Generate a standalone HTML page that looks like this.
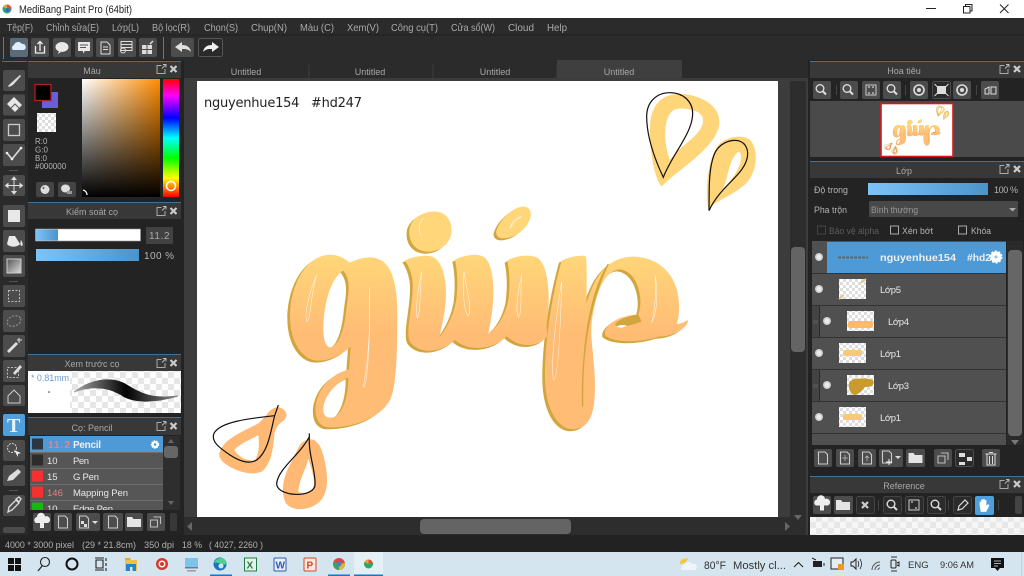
<!DOCTYPE html>
<html><head><meta charset="utf-8"><title>MediBang Paint Pro</title>
<style>
html,body{margin:0;padding:0;background:#222;width:1024px;height:576px;overflow:hidden}
svg{display:block}
text{font-family:"Liberation Sans","Noto Sans CJK SC",sans-serif;font-size:9.5px;fill:#b4b4b4}
.m{font-size:10.5px;fill:#aaa}
.t{text-anchor:middle;font-size:9px;fill:#a8a8a8}
.l{font-size:9.5px;fill:#e8e8e8}
.w{font-size:10px;fill:#eee;font-weight:bold}
.b{fill:#4c4c4c}
.k{fill:#333;font-size:11px}
.tb{fill:#222;font-size:11px}
.st{font-size:9.5px;fill:#b0b0b0}
.f{font-size:9px}
</style></head><body>
<svg width="1024" height="576" viewBox="0 0 1024 576" xmlns="http://www.w3.org/2000/svg">
<defs>
<pattern id="ck" width="12" height="12" patternUnits="userSpaceOnUse"><rect width="12" height="12" fill="#fff"/><rect width="6" height="6" fill="#e6e6e6"/><rect x="6" y="6" width="6" height="6" fill="#e6e6e6"/></pattern>
<pattern id="ck2" width="6" height="6" patternUnits="userSpaceOnUse"><rect width="6" height="6" fill="#fff"/><rect width="3" height="3" fill="#ddd"/><rect x="3" y="3" width="3" height="3" fill="#ddd"/></pattern>
<pattern id="ck3" width="12" height="12" patternUnits="userSpaceOnUse"><rect width="12" height="12" fill="#f6f6f6"/><rect width="6" height="6" fill="#e8e8e8"/><rect x="6" y="6" width="6" height="6" fill="#e8e8e8"/></pattern>
<linearGradient id="sv1" x1="0" x2="1" y1="0" y2="0"><stop offset="0" stop-color="#fff"/><stop offset="1" stop-color="#ff8c00"/></linearGradient>
<linearGradient id="sv2" x1="0" x2="0" y1="0" y2="1"><stop offset="0" stop-color="#000" stop-opacity="0"/><stop offset="1" stop-color="#000"/></linearGradient>
<linearGradient id="hue" x1="0" x2="0" y1="0" y2="1"><stop offset="0" stop-color="#f00"/><stop offset=".14" stop-color="#f0f"/><stop offset=".33" stop-color="#00f"/><stop offset=".5" stop-color="#0ff"/><stop offset=".67" stop-color="#0f0"/><stop offset=".84" stop-color="#ff0"/><stop offset="1" stop-color="#f00"/></linearGradient>
<linearGradient id="bl" x1="0" x2="1" y1="0" y2="0"><stop offset="0" stop-color="#7cc4f8"/><stop offset="1" stop-color="#4a94cc"/></linearGradient>
<linearGradient id="gr" x1="0" x2="1" y1="0" y2="1"><stop offset="0" stop-color="#555"/><stop offset="1" stop-color="#ddd"/></linearGradient>
<linearGradient id="stk" x1="0" x2="1" y1="0" y2="0"><stop offset="0" stop-color="#aaa"/><stop offset=".5" stop-color="#000"/><stop offset="1" stop-color="#888"/></linearGradient>
<linearGradient id="let3" gradientUnits="userSpaceOnUse" x1="0" y1="170" x2="0" y2="400"><stop offset="0" stop-color="#ffd679"/><stop offset="1" stop-color="#ffbc75"/></linearGradient>

<path id="glet" fill-rule="evenodd" d="M208 188C190 170 165 162 140 165C70 175 30 265 30 350C30 430 70 482 115 482C150 482 185 465 212 440L207 508C160 520 120 555 108 610C102 650 115 682 150 682C220 682 300 655 330 600C350 560 352 450 352 340C352 250 335 172 270 172C250 172 232 178 208 188ZM190 212C150 235 130 320 130 385C130 420 138 442 152 442C180 435 195 380 200 320C205 280 215 245 190 212ZM205 532C165 550 130 590 130 630C130 650 145 658 165 650C190 635 205 590 205 532Z"/>
<path id="iuu" d="M375 182C395 170 430 165 450 168C485 175 498 230 498 280C498 330 485 380 478 412C500 385 525 340 530 290C534 250 532 210 525 180C550 165 590 160 610 170C635 185 642 240 640 290C638 340 630 375 625 402C650 385 675 350 685 300C690 260 690 220 682 182C710 165 755 162 775 175C800 195 808 260 806 310C805 340 800 365 800 385L802 408C780 440 720 448 680 408C650 445 570 460 525 420C490 455 420 468 390 425C375 395 400 320 398 250C396 220 385 195 375 182Z"/>
<path id="pst" d="M845 182C865 172 895 165 915 168C920 170 920 190 920 220L920 310C945 220 990 170 1060 170C1140 170 1195 230 1197 310C1198 340 1195 360 1190 372C1205 372 1218 362 1225 360C1222 385 1180 410 1135 410C1085 428 1000 430 975 405C970 385 1000 348 1075 343C1092 300 1075 215 1020 208C970 210 945 290 935 370C930 420 945 480 945 560C945 640 930 685 880 688C830 688 795 620 795 530C795 420 815 290 845 182Z"/>
<g id="letters"><use href="#glet"/><use href="#iuu"/><use href="#pst"/>
<path d="M455 35C490 30 515 55 515 90C515 130 480 155 445 155C410 155 385 130 388 90C392 60 420 38 455 35Z"/>
<path d="M725 20C745 18 755 30 752 50C745 85 705 115 670 115C655 115 645 105 650 90C660 60 695 25 725 20Z"/></g>

<g id="art">
<g transform="translate(280 200) scale(.3333)">
<use href="#letters" transform="translate(-8 6)" fill="#d2a63e"/>
<use href="#letters" fill="url(#let3)"/>
<path d="M1075 343C1040 350 1010 360 1005 375C1020 385 1060 375 1085 365Z" fill="#d2a63e"/>
<path d="M1010 380c10-6 22-6 30-3c-8 6-22 8-30 3Z" fill="#fff"/>
<path d="M908 620C904 500 918 330 985 192C935 270 905 420 908 620Z" fill="#d2a63e" stroke="#d2a63e" stroke-width="4"/>
<g fill="none" stroke="#fff" stroke-width="1.600" opacity=".85">
<path d="M110 225C90 270 72 340 80 365C92 365 92 280 110 225Z"/>
<path d="M268 262C272 380 265 480 250 562C262 560 272 420 268 262Z"/>
<path d="M425 215C415 260 405 330 412 355C422 340 420 260 425 215Z"/>
<path d="M552 215C548 270 550 330 565 348C578 330 560 270 552 215Z"/>
<path d="M725 225C715 270 705 330 715 352C728 340 720 270 725 225Z"/>
<path d="M845 245C830 340 812 470 820 540C836 540 842 360 845 245Z"/>
<path d="M1125 225C1130 270 1125 330 1115 368C1132 340 1135 270 1125 225Z"/>
<path d="M432 55C418 65 412 90 425 108"/>
<path d="M725 50C708 52 695 65 690 85C700 65 712 58 725 50Z"/>
</g></g>
<g transform="translate(630 80) scale(.3333)">
<path fill="#ffd579" fill-rule="evenodd" d="M95 320C70 290 58 200 60 140C62 80 90 42 150 42C200 42 268 70 268 125C268 200 140 270 95 320ZM120 240C100 190 100 120 125 95C140 80 175 85 200 95C215 102 222 112 218 130C210 170 145 200 120 240Z"/>
<path fill="#ffd579" fill-rule="evenodd" d="M235 385C225 330 232 240 265 195C285 172 335 160 360 180C385 205 382 260 360 295C335 335 270 355 235 385ZM280 325C295 290 295 250 318 222C325 212 333 215 333 230C333 265 305 300 280 325Z"/>
<g fill="none" stroke="#111" stroke-width="3.600"><path d="M100 292C75 240 50 170 50 110C50 65 80 38 120 38C160 38 188 65 188 100C188 160 125 225 100 292Z"/><path d="M237 392C238 330 235 270 252 225C265 190 300 178 325 182C350 188 358 215 350 240C335 290 270 320 237 392Z"/></g>
</g>
<g transform="translate(200 395) scale(.3333)">
<path fill="#ffb974" fill-rule="evenodd" d="M58 175C70 130 130 110 175 85C195 70 205 45 225 38C250 32 268 55 255 72C240 88 225 90 222 130C218 175 210 210 185 230C150 245 95 225 68 200C60 190 57 185 58 175ZM103 165C120 145 150 135 175 120C178 145 178 175 165 195C140 200 115 185 103 165Z"/>
<path fill="#ffb974" fill-rule="evenodd" d="M300 150C320 125 350 125 365 165C380 210 390 270 370 305C350 345 280 355 258 325C240 290 250 240 275 200C285 180 290 165 300 150ZM295 290C298 250 318 225 325 190C335 225 348 260 338 280C325 295 305 297 295 290Z"/>
<g fill="none" stroke="#111" stroke-width="3.600"><path d="M235 30L224 62C150 70 60 80 42 115C32 140 60 160 90 180C120 200 150 208 170 195C205 170 212 110 224 62"/><path d="M328 115L328 125C300 180 235 220 230 265C230 290 270 300 300 298C325 296 345 285 345 270C348 230 325 180 328 125"/></g>
</g>
</g>
<g id="mag"><circle cx="-1" cy="-1" r="3.800" fill="none" stroke="#ddd" stroke-width="1.400"/><path d="M2 2L5 5" stroke="#ddd" stroke-width="2"/></g>
<g id="doc"><path d="M-4.500-6H2L4.500-3.500V6H-4.500Z" fill="none" stroke="#ccc" stroke-width="1.100"/></g>
<g id="hd"><path d="M.5-3.500H-4v8H4V0" fill="none" stroke="#aaa"/><path d="M1-.5L4.500-4M2-4.500h3v3" fill="none" stroke="#bbb" stroke-width=".9"/></g>
<g id="xx"><path d="M-3-3L3 3M3-3L-3 3" stroke="#ccc" stroke-width="2.200"/></g>
<g id="eye"><circle r="4" fill="#ccc"/><circle r="2.500" fill="#ececec"/></g>
<g id="fld"><path d="M-7-5h5l1.500 2H7v8H-7Z" fill="#e4e4e4"/></g>
<g id="cop"><path d="M-5-2h7v7h-7Z M-2-5h7v7" fill="none" stroke="#bbb" stroke-width="1.100"/></g>
<g id="upl"><path d="M-6 1a3.200 3.200 0 0 1 1-6a4 4 0 0 1 8-0.500a3.400 3.400 0 0 1 3 6.500H2V6H-2V1Z" fill="#eee"/></g>
</defs>

<!-- title bar -->
<rect width="1024" height="18" fill="#fff"/>
<circle cx="7" cy="9" r="4.500" fill="#2fa56a"/><path d="M7 4.500a4.500 4.500 0 0 1 4.500 4.500H7Z" fill="#e0503c"/><path d="M3 7a4.500 4.500 0 0 1 4-2.500V9Z" fill="#e8a23a"/><circle cx="7.500" cy="10" r="2" fill="#2c6fc0"/>
<text x="19" y="13" class="tb" textLength="113" lengthAdjust="spacingAndGlyphs">MediBang Paint Pro (64bit)</text>
<path d="M926 8.500h10" stroke="#222"/><path d="M963.500 6.500h6.500v6.500h-6.500ZM965.500 6.500v-2h6.500v6.500h-2" fill="none" stroke="#222"/><path d="M1000 4.500l8.500 8.500M1008.500 4.500l-8.500 8.500" stroke="#222"/>

<!-- menu -->
<rect y="18" width="1024" height="42" fill="#2b2b2b"/><rect y="34.500" width="1024" height="1" fill="#222"/>
<text class="m" x="7" y="31" textLength="26" lengthAdjust="spacingAndGlyphs">Tệp(F)</text><text class="m" x="46" y="31" textLength="53" lengthAdjust="spacingAndGlyphs">Chỉnh sửa(E)</text><text class="m" x="112" y="31" textLength="27" lengthAdjust="spacingAndGlyphs">Lớp(L)</text><text class="m" x="152" y="31" textLength="38" lengthAdjust="spacingAndGlyphs">Bộ lọc(R)</text><text class="m" x="204" y="31" textLength="34" lengthAdjust="spacingAndGlyphs">Chọn(S)</text><text class="m" x="251" y="31" textLength="36" lengthAdjust="spacingAndGlyphs">Chụp(N)</text><text class="m" x="300" y="31" textLength="34" lengthAdjust="spacingAndGlyphs">Màu (C)</text><text class="m" x="347" y="31" textLength="32" lengthAdjust="spacingAndGlyphs">Xem(V)</text><text class="m" x="391" y="31" textLength="47" lengthAdjust="spacingAndGlyphs">Công cụ(T)</text><text class="m" x="451" y="31" textLength="44" lengthAdjust="spacingAndGlyphs">Cửa sổ(W)</text><text class="m" x="508" y="31" textLength="26" lengthAdjust="spacingAndGlyphs">Cloud</text><text class="m" x="547" y="31" textLength="20" lengthAdjust="spacingAndGlyphs">Help</text>

<!-- toolbar -->
<rect x="3" y="37" width="1" height="22" fill="#4d7f9f"/><rect x="163" y="37" width="1" height="22" fill="#4d7f9f"/>
<g class="b"><rect x="10" y="38" width="18" height="19" rx="2" fill="#5c6a76"/><rect x="31" y="38" width="18" height="19" rx="2"/><rect x="53" y="38" width="18" height="19" rx="2"/><rect x="75" y="38" width="18" height="19" rx="2"/><rect x="96" y="38" width="18" height="19" rx="2"/><rect x="118" y="38" width="18" height="19" rx="2"/><rect x="139" y="38" width="18" height="19" rx="2"/><rect x="171" y="38" width="23" height="19" rx="2"/></g>
<rect x="198.500" y="38.500" width="24" height="18" rx="2" fill="#2a2a2a" stroke="#555"/>
<path d="M13 50a3 3 0 0 1 1-5a4.500 4.500 0 0 1 8-1a3.200 3.200 0 0 1 2 6Z" fill="#dceeff"/>
<path d="M35.500 46v7h9v-7M40 51v-9M37.500 44l2.500-2.500 2.500 2.500" fill="none" stroke="#eee" stroke-width="1.300"/>
<ellipse cx="62" cy="47" rx="6.500" ry="5" fill="#e8e8e8"/><path d="M59 51l-1 3 3-2Z" fill="#e8e8e8"/>
<path d="M78 42h12v9h-5l-2 2.500V51h-5Z" fill="#e8e8e8"/><path d="M80 45h8M80 47.500h6" stroke="#555"/>
<path d="M101 42h6l3 3v9h-9ZM103 47h5M103 49.500h5" fill="none" stroke="#ddd"/>
<path d="M121 41.500h11v9h-11ZM121 44.500h11M121 47.500h11" fill="none" stroke="#ddd"/><circle cx="123" cy="50.500" r="2.500" fill="none" stroke="#ddd"/>
<path d="M142 45h10v9h-10Z" fill="#ddd"/><path d="M147 45v9M142 49.500h10" stroke="#4c4c4c"/><path d="M150 44l3-3" stroke="#ddd" stroke-width="1.500"/>
<path d="M175 47l7-5v3c5 0 8 2 9 7c-3-3-5-3-9-3v3Z" fill="#e0e0e0"/>
<path d="M219 47l-7-5v3c-5 0-8 2-9 7c3-3 5-3 9-3v3Z" fill="#f0f0f0"/>

<!-- left tool column -->
<rect y="60" width="28" height="475" fill="#2a2a2a"/>
<rect x="2" y="61" width="25" height="1" fill="#46708c"/>
<g class="b"><rect x="3" y="70" width="22" height="21" rx="2"/><rect x="3" y="94.500" width="22" height="21" rx="2"/><rect x="3" y="119" width="22" height="22" rx="2"/><rect x="3" y="144" width="22" height="22" rx="2"/><rect x="3" y="175" width="22" height="21" rx="2"/><rect x="3" y="205" width="22" height="22" rx="2"/><rect x="3" y="230" width="22" height="22" rx="2"/><rect x="3" y="255" width="22" height="22" rx="2"/><rect x="3" y="285" width="22" height="22" rx="2"/><rect x="3" y="310" width="22" height="22" rx="2"/><rect x="3" y="335" width="22" height="22" rx="2"/><rect x="3" y="360" width="22" height="22" rx="2"/><rect x="3" y="385" width="22" height="21" rx="2"/><rect x="3" y="440" width="22" height="21" rx="2"/><rect x="3" y="465" width="22" height="21" rx="2"/><rect x="3" y="495" width="22" height="21" rx="2"/><rect x="3" y="527" width="22" height="6" rx="2"/></g>
<rect x="3" y="414" width="22" height="22" rx="2" fill="#4f9fdc"/>
<rect x="9" y="170" width="9" height="1" fill="#555"/><rect x="9" y="281" width="9" height="1" fill="#555"/><rect x="9" y="490" width="9" height="1" fill="#555"/>
<path d="M8 86l3-3 9-8 1 1-8 9-4 2Z" fill="#ddd"/>
<path d="M14 97l8 8-7 7-8-8Z" fill="#e8e8e8"/><path d="M11 108l4-4 4 4" fill="none" stroke="#555"/>
<rect x="8.500" y="124.500" width="11" height="11" fill="none" stroke="#ccc" stroke-width="1.300"/>
<path d="M7 153l5 6 9-11" fill="none" stroke="#ddd" stroke-width="1.600"/><circle cx="7" cy="153" r="1.300" fill="#eee"/><circle cx="12" cy="159" r="1.300" fill="#eee"/><circle cx="21" cy="148" r="1.300" fill="#eee"/>
<path d="M14 177v17M5.500 185.500h17M14 177l-2 2.500h4ZM14 194l-2-2.500h4ZM5.500 185.500l2.500-2v4ZM22.500 185.500l-2.500-2v4Z" fill="#ddd" stroke="#ddd"/>
<rect x="8" y="210" width="12" height="12" fill="#e8e8e8"/>
<path d="M9 236h6l5 8c-2 3-10 4-13 0Z" fill="#e8e8e8"/><path d="M21 240c2 3 2 5 1 6c-2 0-2-3-1-6Z" fill="#e8e8e8"/>
<rect x="7" y="259" width="14" height="14" fill="url(#gr)" stroke="#ccc"/>
<rect x="8.500" y="290.500" width="11" height="11" fill="none" stroke="#bbb" stroke-dasharray="2 1.500"/>
<ellipse cx="14" cy="321" rx="7" ry="5" fill="none" stroke="#999" stroke-dasharray="2 1.500" transform="rotate(-20 14 321)"/>
<path d="M7 351l9-9 2 2-9 9Z" fill="#ddd"/><path d="M19 338v5M17 340h5" stroke="#ddd"/>
<rect x="7.500" y="367.500" width="11" height="10" fill="none" stroke="#bbb" stroke-dasharray="2 1.500"/><path d="M13 373l7-8 2 2-7 8Z" fill="#ddd"/>
<path d="M8 396l6-6 6 6v7H8Z" fill="none" stroke="#ccc"/>
<text x="7" y="432" style="font-family:'Liberation Serif',serif;font-size:20px;font-weight:bold;fill:#e6f3fc">T</text>
<circle cx="12" cy="448" r="4.500" fill="none" stroke="#ccc" stroke-dasharray="2 1"/><path d="M14 450l7 3-3 1 0 3Z" fill="#eee"/>
<path d="M7 481l2-5 9-7 3 3-8 8Z" fill="#ddd"/>
<path d="M8 512l1-5 7-7 3 3-7 7ZM16 499l3-2 2 2-2 3Z" fill="none" stroke="#ddd" stroke-width="1.300"/>

<!-- left panels -->
<rect x="28" y="60" width="156" height="475" fill="#232323"/>
<rect x="28" y="61" width="153" height="1" fill="#46708c"/><rect x="28" y="62" width="153" height="16" fill="#383838"/>
<text class="t" x="92" y="74">Màu</text>
<use href="#hd" x="161" y="69"/><use href="#xx" x="173.500" y="69"/>
<rect x="42" y="92" width="16" height="16" fill="#6a5fd8"/>
<rect x="35" y="84.500" width="16" height="16" fill="#000" stroke="#b81c1c" stroke-width="1.300"/>
<rect x="37" y="113" width="19" height="19" fill="url(#ck2)"/>
<text x="35" y="144" style="font-size:8px">R:0</text><text x="35" y="152.500" style="font-size:8px">G:0</text><text x="35" y="161" style="font-size:8px">B:0</text><text x="35" y="169" style="font-size:8px">#000000</text>
<rect x="82" y="79" width="78" height="118" fill="url(#sv1)"/><rect x="82" y="79" width="78" height="118" fill="url(#sv2)"/>
<path d="M83 190a5 5 0 0 1 4 5" fill="none" stroke="#fff" stroke-width="1.300"/>
<rect x="163" y="79" width="16" height="118" fill="url(#hue)"/>
<circle cx="171" cy="186" r="4.500" fill="none" stroke="#fff" stroke-width="1.600"/>
<rect x="36" y="182" width="18" height="15" rx="2" fill="#444"/><rect x="58" y="182" width="18" height="15" rx="2" fill="#444"/>
<ellipse cx="45" cy="189.500" rx="4.500" ry="4.500" fill="#ddd"/><circle cx="43.500" cy="188" r="1" fill="#555"/>
<ellipse cx="65.500" cy="188.500" rx="4.500" ry="4" fill="#ddd"/><rect x="67" y="191" width="5" height="3" fill="#999"/>

<rect x="28" y="202" width="153" height="1" fill="#46708c"/><rect x="28" y="203" width="153" height="16" fill="#383838"/>
<text class="t" x="92" y="215">Kiểm soát cọ</text>
<use href="#hd" x="161" y="211"/><use href="#xx" x="173.500" y="211"/>
<rect x="35.500" y="229" width="105" height="12" fill="#fff" stroke="#999" stroke-width=".6"/><rect x="36" y="229.500" width="22" height="11" fill="url(#bl)"/>
<rect x="146" y="227" width="27" height="17" rx="1" fill="#424242"/><text x="149" y="239" style="font-size:10px;fill:#aaa;letter-spacing:.6px">11.2</text>
<rect x="36" y="249" width="103" height="12" fill="url(#bl)"/>
<text x="144" y="259" style="font-size:10px" textLength="30">100 %</text>

<rect x="28" y="354" width="153" height="1" fill="#46708c"/><rect x="28" y="355" width="153" height="16" fill="#383838"/>
<text class="t" x="92" y="367">Xem trước cọ</text>
<use href="#hd" x="161" y="363"/><use href="#xx" x="173.500" y="363"/>
<rect x="70" y="371" width="111" height="42" fill="url(#ck)"/><rect x="28" y="371" width="42" height="42" fill="#fff"/>
<text x="31" y="381" style="font-size:9px;fill:#6a9ed0" textLength="38" lengthAdjust="spacingAndGlyphs">* 0.81mm</text><circle cx="49" cy="392" r=".8" fill="#333"/>
<path d="M74 392C90 380 110 376 125 384C138 392 150 400 178 396C150 404 130 402 120 394C105 386 90 386 74 392Z" fill="url(#stk)" stroke="url(#stk)"/>

<rect x="28" y="417" width="153" height="1" fill="#46708c"/><rect x="28" y="418" width="153" height="17" fill="#383838"/>
<text class="t" x="92" y="431">Cọ: Pencil</text>
<use href="#hd" x="161" y="426"/><use href="#xx" x="173.500" y="426"/>
<rect x="30" y="436" width="133" height="74" fill="#565656"/>
<rect x="30" y="436" width="133" height="16" fill="#4d9ad6"/>
<path d="M30 468.500h133M30 484.500h133M30 500.500h133M30 452.500h133" stroke="#777" stroke-width=".7"/>
<rect x="32" y="438.500" width="11" height="11" fill="#2d3640"/><rect x="32" y="454.500" width="11" height="11" fill="#2c2c2c"/><rect x="32" y="470.500" width="11" height="11" fill="#f53030"/><rect x="32" y="486.500" width="11" height="11" fill="#f53030"/><rect x="32" y="502.500" width="11" height="7.500" fill="#14b814"/>
<text x="48" y="448" style="fill:#f08080;font-size:10px;font-weight:bold" textLength="22">11.2</text><text x="73" y="448" class="w" textLength="28">Pencil</text>
<circle cx="155" cy="444.500" r="3.500" fill="#fff" stroke="#fff" stroke-width="1.500" stroke-dasharray="1.500 1"/><circle cx="155" cy="444.500" r="1.300" fill="#4d9ad6"/>
<text x="47" y="464" class="l">10</text><text x="73" y="464" class="l" textLength="16">Pen</text>
<text x="47" y="480" class="l">15</text><text x="73" y="480" class="l" textLength="26">G Pen</text>
<text x="47" y="496" style="fill:#e48080;font-size:9.500px">146</text><text x="73" y="496" class="l" textLength="55">Mapping Pen</text>
<svg x="30" y="500" width="133" height="10"><text x="17" y="12" class="l">10</text><text x="43" y="12" class="l" textLength="40">Edge Pen</text></svg>
<rect x="163" y="436" width="17" height="74" fill="#2e2e2e"/><rect x="164" y="446" width="14" height="12" rx="3" fill="#666"/><path d="M168 443l3-4 3 4Z M168 501l3 4 3-4Z" fill="#666"/>
<g class="b"><rect x="33" y="513" width="18" height="18" rx="2"/><rect x="54" y="513" width="18" height="18" rx="2"/><rect x="76" y="513" width="24" height="18" rx="2"/><rect x="103" y="513" width="20" height="18" rx="2"/><rect x="125" y="513" width="18" height="18" rx="2"/><rect x="147" y="513" width="18" height="18" rx="2"/><rect x="170" y="513" width="7" height="18" rx="2" fill="#383838"/></g>
<use href="#upl" x="42" y="522"/><use href="#doc" x="63" y="522"/><use href="#doc" x="84" y="522"/><rect x="81" y="521" width="3" height="3" fill="#ddd"/><rect x="84" y="524" width="3" height="3" fill="#ddd"/><path d="M92 521h6l-3 3Z" fill="#ddd"/><use href="#doc" x="113" y="522"/><use href="#fld" x="134" y="522"/><use href="#cop" x="155.500" y="522"/>

<!-- canvas area -->
<rect x="184" y="60" width="626" height="475" fill="#3c3c3c"/>
<rect x="184" y="60" width="626" height="21" fill="#2b2b2b"/>
<rect x="557" y="60" width="125" height="20" fill="#3f3f3f"/>
<path d="M309 64v15M433 64v15M557 64v15" stroke="#3c3c3c"/>
<rect x="184" y="78" width="626" height="3" fill="#3c3c3c"/>
<text class="t" x="246" y="75">Untitled</text><text class="t" x="370" y="75">Untitled</text><text class="t" x="495" y="75">Untitled</text><text class="t" x="619" y="75">Untitled</text>
<rect x="197" y="81" width="581" height="436" fill="#fff"/>
<text x="204" y="107" style="font-family:'DejaVu Sans',sans-serif;font-size:13px;fill:#222" textLength="158" xml:space="preserve">nguyenhue154   #hd247</text>
<use href="#art"/>
<rect x="184" y="517" width="606" height="18" fill="#2d2d2d"/>
<rect x="420" y="519" width="151" height="15" rx="4" fill="#646464"/>
<path d="M192 522v9l-5-4.500Z" fill="#666"/><path d="M785 522v9l5-4.500Z" fill="#666"/>
<rect x="790" y="81" width="16" height="454" fill="#2d2d2d"/><rect x="791" y="247" width="14" height="105" rx="4" fill="#646464"/>
<path d="M794 515h8l-4 5Z" fill="#666"/>

<!-- right panels -->
<rect x="808" y="60" width="216" height="475" fill="#232323"/>
<rect x="810" y="61" width="214" height="1" fill="#46708c"/><rect x="810" y="62" width="214" height="16" fill="#383838"/>
<text class="t" x="904" y="74">Hoa tiêu</text>
<use href="#hd" x="1004" y="69"/><use href="#xx" x="1017" y="69"/>
<g class="b"><rect x="813" y="81" width="18" height="18" rx="2"/><rect x="840" y="81" width="18" height="18" rx="2"/><rect x="862" y="81" width="18" height="18" rx="2"/><rect x="883" y="81" width="18" height="18" rx="2"/><rect x="910" y="81" width="18" height="18" rx="2"/><rect x="953" y="81" width="18" height="18" rx="2"/><rect x="981" y="81" width="18" height="18" rx="2"/></g>
<rect x="932.500" y="81.500" width="18" height="17" rx="2" fill="#2b2b2b" stroke="#4d4d4d"/>
<use href="#mag" x="821" y="89.500"/><use href="#mag" x="848" y="89.500"/><use href="#mag" x="892" y="89.500"/>
<rect x="866" y="85" width="10" height="10" fill="none" stroke="#ccc"/><path d="M868 87h2M874 93h-2M868 93h2M874 87h-2" stroke="#eee"/>
<circle cx="919" cy="90" r="5" fill="none" stroke="#ddd" stroke-width="1.600"/><circle cx="919" cy="90" r="2" fill="#ddd"/>
<rect x="937" y="86" width="9" height="8" fill="#ddd"/><path d="M934.500 84l3 3M948.500 84l-3 3M934.500 96l3-3M948.500 96l-3-3" stroke="#ddd"/>
<circle cx="962" cy="90" r="5" fill="none" stroke="#ddd" stroke-width="1.600"/><circle cx="962" cy="90" r="2" fill="#ddd"/>
<path d="M985 94v-5l4-2v7ZM991 87h5v7h-5Z" fill="none" stroke="#ddd"/>
<path d="M836.500 85v10M905.500 85v10M976.500 85v10" stroke="#444"/>
<rect x="810" y="101" width="214" height="56" fill="#4a4a4a"/>
<rect x="881" y="103.500" width="72" height="53" fill="#fff" stroke="#d81818" stroke-width="1.600"/>
<svg x="882" y="104.500" width="70" height="51" viewBox="197 81 581 436" preserveAspectRatio="none"><use href="#art"/></svg>

<rect x="810" y="161" width="214" height="1" fill="#46708c"/><rect x="810" y="162" width="214" height="16" fill="#383838"/>
<text class="t" x="904" y="174">Lớp</text>
<use href="#hd" x="1004" y="169"/><use href="#xx" x="1017" y="169"/>
<text x="814" y="193" class="f" textLength="34" lengthAdjust="spacingAndGlyphs">Độ trong</text>
<rect x="868" y="183" width="120" height="12" fill="url(#bl)"/>
<text x="994" y="193" class="f" textLength="24">100 %</text>
<text x="814" y="213" class="f" textLength="33" lengthAdjust="spacingAndGlyphs">Pha trộn</text>
<rect x="869" y="201" width="149" height="16" rx="1" fill="#484848"/>
<text x="871" y="213" style="font-size:9px;fill:#999" textLength="47" lengthAdjust="spacingAndGlyphs">Bình thường</text><path d="M1009 208h7l-3.500 3.500Z" fill="#aaa"/>
<rect x="817.500" y="226" width="8" height="8" fill="none" stroke="#444"/><text x="829" y="234" style="font-size:9px;fill:#5c5c5c" textLength="50" lengthAdjust="spacingAndGlyphs">Bảo vệ alpha</text>
<rect x="890.500" y="226" width="8" height="8" fill="none" stroke="#aaa"/><text x="902" y="234" class="f" textLength="31" lengthAdjust="spacingAndGlyphs">Xén bớt</text>
<rect x="958.500" y="226" width="8" height="8" fill="none" stroke="#aaa"/><text x="971" y="234" class="f" textLength="20" lengthAdjust="spacingAndGlyphs">Khóa</text>

<rect x="812" y="241" width="194" height="204" fill="#505050"/>
<rect x="827" y="242" width="179" height="31" fill="#4d9ad6"/>
<path d="M812 273.500h194M812 305.500h194M812 337.500h194M812 369.500h194M812 401.500h194M812 433.500h194" stroke="#333"/>
<rect x="812" y="306" width="7" height="31" fill="#444"/><rect x="812" y="370" width="7" height="31" fill="#444"/><path d="M819.500 306v31M819.500 370v31" stroke="#2a2a2a"/>
<path d="M813 321h5M813 323h5M813 385h5M813 387h5" stroke="#666" stroke-width=".7"/>
<use href="#eye" x="819" y="257"/><use href="#eye" x="819" y="289"/><use href="#eye" x="827" y="321"/><use href="#eye" x="819" y="353"/><use href="#eye" x="827" y="385"/><use href="#eye" x="819" y="417"/>
<path d="M838 257.500h30" stroke="#5a6a72" stroke-width="2" stroke-dasharray="3 1"/>
<text x="880" y="261" class="w" textLength="76" lengthAdjust="spacingAndGlyphs">nguyenhue154</text><text x="967" y="261" class="w" textLength="24" lengthAdjust="spacingAndGlyphs">#hd2</text>
<circle cx="996" cy="257" r="5.500" fill="#fff" stroke="#fff" stroke-width="2" stroke-dasharray="2 1.500"/><circle cx="996" cy="257" r="1.500" fill="#8fc3ea"/>
<rect x="839" y="279" width="27" height="20" fill="url(#ck2)"/><path d="M839 299l5-4M866 279l-5 4" stroke="#e6c78c" stroke-width="2"/>
<rect x="847" y="311" width="27" height="20" fill="url(#ck2)"/><rect x="848" y="321" width="25" height="7" rx="2" fill="#ffb968"/>
<rect x="839" y="343" width="27" height="20" fill="url(#ck2)"/><rect x="843" y="350" width="19" height="6" rx="2" fill="#fbc779"/>
<rect x="847" y="375" width="27" height="20" fill="url(#ck2)"/><path d="M849 383c2-4 8-5 10-4c3-1 8-1 14 1c2 6-3 7-8 7c-2 3-6 7-10 8c-4 0-7-6-6-12Z" fill="#c99a2e"/>
<rect x="839" y="407" width="27" height="20" fill="url(#ck2)"/><rect x="843" y="414" width="19" height="6" rx="2" fill="#fbc779"/>
<text x="880" y="293" class="l" textLength="21">Lớp5</text><text x="888" y="325" class="l" textLength="21">Lớp4</text><text x="880" y="357" class="l" textLength="21">Lớp1</text><text x="888" y="389" class="l" textLength="21">Lớp3</text><text x="880" y="421" class="l" textLength="21">Lớp1</text>
<rect x="1007" y="241" width="16" height="204" fill="#2a2a2a"/><rect x="1008" y="250" width="14" height="186" rx="4" fill="#666"/>
<path d="M1011 440h8l-4 5Z" fill="#777"/>
<g class="b"><rect x="814" y="449" width="18" height="18" rx="2"/><rect x="836" y="449" width="18" height="18" rx="2"/><rect x="858" y="449" width="18" height="18" rx="2"/><rect x="879" y="449" width="24" height="18" rx="2"/><rect x="906" y="449" width="19" height="18" rx="2"/><rect x="934" y="449" width="18" height="18" rx="2"/><rect x="982" y="449" width="18" height="18" rx="2"/></g>
<rect x="955.500" y="449.500" width="18" height="17" rx="2" fill="#2b2b2b" stroke="#4d4d4d"/>
<use href="#doc" x="823" y="458"/><use href="#doc" x="845" y="458"/><use href="#doc" x="867" y="458"/><path d="M845 455v6M842 458h6M867 461v-5M865 458l2-2 2 2" stroke="#bbb" fill="none" stroke-width=".8"/>
<use href="#doc" x="887" y="457"/><path d="M889 459v6M886 462h6" stroke="#eee"/><path d="M895 456h6l-3 3Z" fill="#ddd"/>
<use href="#fld" x="915.500" y="458"/><use href="#cop" x="943" y="458"/>
<path d="M959 453h6v4h-6ZM967 457h5v4h-5ZM959 462h6v3h-6Z" fill="#ddd"/>
<path d="M987 454h8v11h-8ZM985.500 454h11M989 452.500h4M989.500 456v8M992.500 456v8" fill="none" stroke="#ddd"/>

<rect x="810" y="476" width="214" height="1" fill="#46708c"/><rect x="810" y="477" width="214" height="16" fill="#383838"/>
<text class="t" x="904" y="489">Reference</text>
<use href="#hd" x="1004" y="484"/><use href="#xx" x="1017" y="484"/>
<rect x="813" y="496" width="18" height="18" rx="2" fill="#4c4c4c"/><rect x="834" y="496" width="19" height="18" rx="2" fill="#4c4c4c"/>
<g fill="#2b2b2b" stroke="#444"><rect x="856.500" y="496.500" width="18" height="17" rx="2"/><rect x="883.500" y="496.500" width="18" height="17" rx="2"/><rect x="905.500" y="496.500" width="18" height="17" rx="2"/><rect x="927.500" y="496.500" width="18" height="17" rx="2"/><rect x="953.500" y="496.500" width="18" height="17" rx="2"/></g>
<rect x="975" y="496" width="19" height="19" rx="2" fill="#4f9fdc"/><rect x="1015" y="496" width="7" height="18" rx="2" fill="#444"/>
<use href="#upl" x="822" y="504.500"/><use href="#fld" x="843" y="505"/><use href="#xx" x="865" y="505"/>
<use href="#mag" x="892" y="505"/><use href="#mag" x="936" y="505"/><rect x="909" y="500" width="10" height="10" fill="none" stroke="#ccc"/><path d="M911 502h2M917 508h-2" stroke="#eee"/>
<path d="M958 510l1-4 6-6 3 3-6 6Z" fill="none" stroke="#ddd" stroke-width="1.200"/>
<path d="M980 505v-3h1.500v3V500h1.500v5V499.500h1.500V505V500.500h1.500V507l2-2.500 1 1-3 6h-5Z" fill="#fff" stroke="#fff" stroke-width=".7"/>
<path d="M878.500 500v10M948.500 500v10M998.500 500v10" stroke="#444"/>
<rect x="810" y="517" width="214" height="18" fill="url(#ck3)"/>

<!-- status -->
<rect y="535" width="1024" height="17" fill="#222"/>
<text x="5" y="548" class="st" textLength="69" lengthAdjust="spacingAndGlyphs">4000 * 3000 pixel</text><text x="82" y="548" class="st" textLength="54" lengthAdjust="spacingAndGlyphs">(29 * 21.8cm)</text><text x="144" y="548" class="st" textLength="30" lengthAdjust="spacingAndGlyphs">350 dpi</text><text x="182" y="548" class="st" textLength="20" lengthAdjust="spacingAndGlyphs">18 %</text><text x="209" y="548" class="st" textLength="54" lengthAdjust="spacingAndGlyphs">( 4027, 2260 )</text>

<!-- taskbar -->
<rect y="552" width="1024" height="24" fill="#d5e5ef"/>
<rect x="354" y="552" width="29" height="24" fill="#e4eff6"/>
<rect x="328" y="574.500" width="22" height="1.500" fill="#0a78d4"/><rect x="354" y="574.500" width="29" height="1.500" fill="#0a78d4"/><rect x="210" y="574.500" width="22" height="1.500" fill="#0a78d4"/>
<path d="M8 558h6v6H8ZM15 558h6v6h-6ZM8 565h6v6H8ZM15 565h6v6h-6Z" fill="#111"/>
<circle cx="45" cy="562" r="4.500" fill="none" stroke="#222" stroke-width="1.100"/><path d="M42 566l-4 5" stroke="#222" stroke-width="1.200"/>
<circle cx="72" cy="564" r="5.500" fill="none" stroke="#111" stroke-width="2"/>
<path d="M95 558h9M95 570h9M96 560h7v8h-7ZM106 558v3M106 563v3M106 568v3" fill="none" stroke="#222" stroke-width="1.100"/>
<path d="M125 560h12v11h-12Z" fill="#f3c143"/><path d="M125 558h5l1 2h-6Z" fill="#e8a92c"/><rect x="126" y="564" width="10" height="7" fill="#2b83c6"/><rect x="130" y="567" width="2.500" height="4" fill="#d5e5ef"/>
<circle cx="162" cy="564" r="6" fill="#d8372c"/><circle cx="162" cy="564" r="3.500" fill="#fff"/><circle cx="162" cy="564" r="2" fill="#d8372c"/>
<rect x="185" y="558" width="13" height="9" fill="#7cc3ee"/><rect x="185" y="567" width="13" height="1.500" fill="#778"/><rect x="187" y="570" width="9" height="1.500" fill="#99a"/>
<circle cx="220" cy="564" r="6.500" fill="#1676c2"/><path d="M214 563c2-6 11-7 12-1c1 3-3 3-4 2c-3-1-6-2-8-1Z" fill="#4fd18b"/><circle cx="221" cy="566" r="2.500" fill="#d5e5ef"/>
<rect x="244.500" y="558" width="12" height="13" fill="#e6f2e6" stroke="#1e7e45"/><text x="246.500" y="568.500" style="font-size:10px;font-weight:bold;fill:#1e7e45">X</text>
<rect x="274" y="558" width="12" height="13" rx="1" fill="#e8eefa" stroke="#2b5cb0"/><text x="275.500" y="568.500" style="font-size:10px;font-weight:bold;fill:#2b5cb0">W</text>
<rect x="304" y="558" width="12" height="13" rx="1" fill="#fbe8de" stroke="#d24726"/><text x="306.500" y="568.500" style="font-size:10px;font-weight:bold;fill:#d24726">P</text>
<circle cx="339" cy="564" r="6" fill="#d9493c"/><path d="M339 564L334 561.500A6 6 0 0 0 339 570Z" fill="#3ba55c"/><path d="M339 564L345 563A6 6 0 0 1 339 570Z" fill="#d9b63c"/><circle cx="339" cy="564" r="2.500" fill="#4a7cc8"/>
<circle cx="368.500" cy="564" r="4.500" fill="#2fa56a"/><path d="M368.500 559.500a4.500 4.500 0 0 1 4.500 4.500h-4.500Z" fill="#e0503c"/><path d="M364.500 562a4.500 4.500 0 0 1 4-2.500V564Z" fill="#e8a23a"/>
<path d="M680 564a4 4 0 0 1 4-5c1-1 3-1 4 0l-3 4Z" fill="#f2c744"/><path d="M682 570a3 3 0 0 1 2-5a4.500 4.500 0 0 1 8-1a3 3 0 0 1 3 6Z" fill="#eef5fb"/>
<text x="704" y="569" class="k" textLength="22" lengthAdjust="spacingAndGlyphs">80°F</text><text x="733" y="569" class="k" textLength="53" lengthAdjust="spacingAndGlyphs">Mostly cl...</text>
<path d="M794 567l4.500-4.500 4.500 4.500" fill="none" stroke="#222" stroke-width="1.100"/>
<rect x="813" y="561" width="9" height="6" fill="#222"/><path d="M812 558l4 2M824 563v3" stroke="#222"/>
<rect x="831" y="558" width="12" height="11" fill="#e5eef4" stroke="#222"/><rect x="838" y="564" width="6" height="6" fill="#f09a1c"/>
<path d="M851 562h2l3-3v10l-3-3h-2Z" fill="none" stroke="#222"/><path d="M858 561c1 2 1 4 0 6M860 559c2 3 2 7 0 10" fill="none" stroke="#222" stroke-width=".8"/>
<path d="M872 570a8 8 0 0 1 8-8M875 570a5 5 0 0 1 5-5M878 570a2 2 0 0 1 2-2" fill="none" stroke="#555"/>
<path d="M891 557h6M891 571h6" stroke="#333"/><rect x="891" y="560" width="5" height="8" rx="1" fill="none" stroke="#222"/><path d="M897 563l2-1v4l-2-1" fill="none" stroke="#222"/>
<text x="908" y="568" class="k" style="font-size:9.500px">ENG</text>
<text x="940" y="568" class="k" style="font-size:9.500px" textLength="34" lengthAdjust="spacingAndGlyphs">9:06 AM</text>
<path d="M991 558h13v10h-4l-2.500 3-2.500-3h-4Z" fill="#111"/><path d="M994 561h7M994 563.500h7M994 566h4" stroke="#d5e5ef" stroke-width=".7"/>
<path d="M1021.500 552v24" stroke="#c2d2dc"/>
</svg>
</body></html>
